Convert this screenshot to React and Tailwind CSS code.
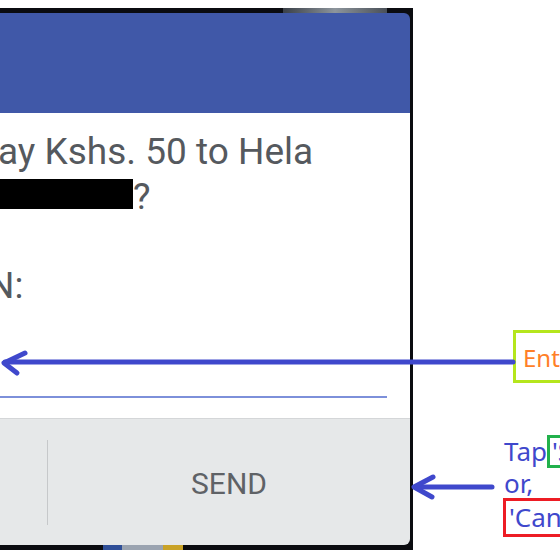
import React from "react";

export default function App() {
  return (
    <div className="relative w-[560px] h-[560px] overflow-hidden bg-white font-['Roboto',sans-serif]">
      {/* phone screenshot crop */}
      <div className="mt-2 w-[413px] h-[542px] bg-[#0b0c10] pr-[3px] flex flex-col">
        <div className="h-[5px] flex shrink-0">
          <div className="w-[283px]" />
          <div className="w-[104px] bg-gradient-to-r from-[#3a4048] via-[#8d959c] to-[#4a5058]" />
        </div>

        <div className="flex-1 flex flex-col rounded-r-[6px] overflow-hidden">
          <div className="h-[100px] bg-[#4058a8] shrink-0" />

          <div className="h-[305px] bg-white shrink-0 pt-[16px] text-[37px] leading-[45px] text-[#55595e] overflow-hidden">
            <div className="whitespace-nowrap -ml-[2px]">ay Kshs. 50 to Hela</div>
            <div className="whitespace-nowrap">
              <span className="inline-block w-[133px] h-[30px] bg-black" />?
            </div>
            <div className="mt-[44px] -ml-[12px] whitespace-nowrap">N:</div>
            <div className="h-[88px]" />
            <div className="w-[387px] h-[2px] bg-[#7d90da]" />
          </div>

          <div className="flex-1 bg-[#e6e8e9] border-t border-[#d4d6d8] flex items-center">
            <div className="w-[47px]" />
            <div className="w-px h-[85px] bg-[#c6c8ca]" />
            <div className="flex-1 text-center text-[30px] text-[#5f6266] pt-[2px]">SEND</div>
          </div>
        </div>

        <div className="h-[5px] flex shrink-0">
          <div className="w-[103px]" />
          <div className="w-[19px] bg-[#2f4f98]" />
          <div className="w-[41px] bg-[#9aa3b0]" />
          <div className="w-[20px] bg-[#c9a227]" />
        </div>
      </div>

      {/* annotations */}
      <div className="absolute left-[513px] top-[330px] w-[80px] h-[53px] border-[3px] border-[#b5e61d] pl-[7px] pt-[2px] font-['Noto_Sans',sans-serif] text-[24px] leading-[45px] text-[#ff7f27] whitespace-nowrap">
        Enter PIN
      </div>

      <div className="absolute left-[503px] top-[434px] flex flex-col font-['Noto_Sans',sans-serif] text-[26px] text-[#3f48cc] whitespace-nowrap">
        <div className="h-[35px] flex items-start">
          <span className="leading-[35px] pl-px">Tap</span>
          <span className="mt-px h-[33px] border-[3px] border-[#22b14c] pl-[2px] leading-[27px]">'Send'</span>
        </div>
        <div className="h-[29px] leading-[29px] pl-px">or,</div>
        <div className="h-[39px] border-[3px] border-[#ed1c24] pl-[3px] leading-[33px] w-[110px]">'Cancel'</div>
      </div>

      <svg className="absolute inset-0" width="560" height="560" viewBox="0 0 560 560">
        <g stroke="#3f48cc" strokeWidth="5" strokeLinecap="round" strokeLinejoin="round" fill="none">
          <path d="M513 362 H5" />
          <path d="M25 353 L4 363 L17 373" />
          <path d="M492 487 H416" />
          <path d="M433 477 L414 487 L432 497" />
        </g>
      </svg>
    </div>
  );
}
